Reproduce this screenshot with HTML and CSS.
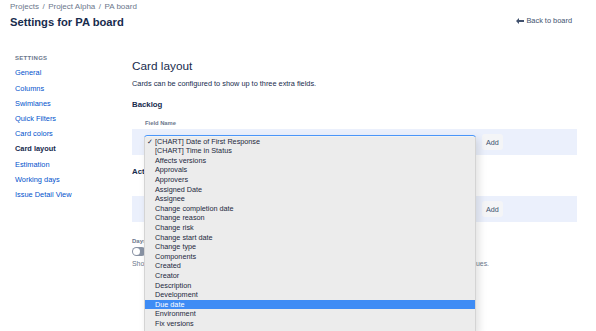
FILE: index.html
```html
<!DOCTYPE html>
<html lang="en">
<head>
<meta charset="utf-8">
<title>Settings for PA board</title>
<link rel="stylesheet" href="styles.css">
</head>
<body>
<header class="header">
  <div class="header-left">
    <nav class="breadcrumb"><span>Projects</span><span class="sep">/</span><span>Project Alpha</span><span class="sep">/</span><span>PA board</span></nav>
    <h1 class="title">Settings for PA board</h1>
  </div>
  <a class="back" href="#"><svg class="back-icon" viewBox="0 0 8 6" width="8" height="6"><path d="M0 3 L3 0 L3 2 L8 2 L8 4 L3 4 L3 6 Z" fill="#42526e"/></svg>Back to board</a>
</header>
<div class="layout">
  <aside class="sidebar">
    <div class="side-title">SETTINGS</div>
    <ul class="side-nav">
      <li><a href="#">General</a></li>
      <li><a href="#">Columns</a></li>
      <li><a href="#">Swimlanes</a></li>
      <li><a href="#">Quick Filters</a></li>
      <li><a href="#">Card colors</a></li>
      <li class="active">Card layout</li>
      <li><a href="#">Estimation</a></li>
      <li><a href="#">Working days</a></li>
      <li><a href="#">Issue Detail View</a></li>
    </ul>
  </aside>
  <main class="main">
    <h2 class="heading">Card layout</h2>
    <p class="desc">Cards can be configured to show up to three extra fields.</p>
    <h3 class="section">Backlog</h3>
    <div class="field-label">Field Name</div>
    <div class="row">
      <div class="select focus">
        <div class="popup">
          <div class="opt checked"><span class="check">✓</span>[CHART] Date of First Response</div>
          <div class="opt">[CHART] Time in Status</div>
          <div class="opt">Affects versions</div>
          <div class="opt">Approvals</div>
          <div class="opt">Approvers</div>
          <div class="opt">Assigned Date</div>
          <div class="opt">Assignee</div>
          <div class="opt">Change completion date</div>
          <div class="opt">Change reason</div>
          <div class="opt">Change risk</div>
          <div class="opt">Change start date</div>
          <div class="opt">Change type</div>
          <div class="opt">Components</div>
          <div class="opt">Created</div>
          <div class="opt">Creator</div>
          <div class="opt">Description</div>
          <div class="opt">Development</div>
          <div class="opt hl">Due date</div>
          <div class="opt">Environment</div>
          <div class="opt">Fix versions</div>
        </div>
      </div>
      <button class="add">Add</button>
    </div>
    <h3 class="section">Active sprints</h3>
    <div class="field-label">Field Name</div>
    <div class="row">
      <div class="select"></div>
      <button class="add">Add</button>
    </div>
    <div class="days-label">Days in column</div>
    <div class="toggle"><span class="knob"></span></div>
    <p class="hint">Show the number of days that an issue has spent in its current column on the board, based on the status values.</p>
  </main>
</div>
</body>
</html>
```
FILE: styles.css
```css
html, body {
  margin: 0;
  padding: 0;
  overflow: hidden;
  background: #fff;
}
body {
  font-family: "Liberation Sans", Arial, sans-serif;
  color: #172b4d;
  width: 596px;
  height: 331px;
}
.header {
  display: flex;
  justify-content: space-between;
  padding: 1px 24px 0 10px;
}
.breadcrumb {
  font-size: 8px;
  line-height: 12px;
  color: #6b778c;
  white-space: nowrap;
}
.breadcrumb .sep {
  margin: 0 3.5px;
}
.title {
  margin: 0;
  font-size: 11.2px;
  line-height: 18px;
  font-weight: 700;
  color: #172b4d;
}
.back {
  margin-top: 14px;
  font-size: 7.4px;
  line-height: 12px;
  height: 12px;
  color: #42526e;
  text-decoration: none;
  display: flex;
  align-items: center;
  gap: 2px;
}
.layout {
  display: grid;
  grid-template-columns: 132px 1fr;
  padding-right: 19px;
}
.sidebar {
  padding: 22px 0 0 15px;
}
.side-title {
  font-size: 6px;
  line-height: 10px;
  font-weight: 700;
  letter-spacing: 0.3px;
  color: #6b778c;
  margin-bottom: 2.4px;
}
.side-nav {
  list-style: none;
  margin: 0;
  padding: 0;
  font-size: 7.4px;
  line-height: 15.2px;
}
.side-nav a {
  color: #0052cc;
  text-decoration: none;
}
.side-nav .active {
  color: #172b4d;
  font-weight: 700;
}
.main {
  padding-top: 27px;
}
.heading {
  margin: 0;
  font-size: 11.8px;
  line-height: 16px;
  font-weight: 400;
}
.desc {
  margin: 5px 0 0;
  font-size: 7.35px;
  line-height: 10px;
}
.section {
  margin: 10px 0 0;
  font-size: 7.8px;
  line-height: 12px;
  font-weight: 700;
}
.section + .field-label {
  margin-top: 8px;
}
.row + .section {
  margin-top: 11px;
}
.field-label {
  padding-left: 13px;
  font-size: 5.8px;
  line-height: 8px;
  font-weight: 700;
  color: #6b778c;
}
.row {
  margin-top: 2px;
  height: 26px;
  background: #ebf0fc;
  display: flex;
  align-items: center;
  padding-left: 12px;
  gap: 6px;
}
.select {
  position: relative;
  width: 332px;
  height: 15px;
  box-sizing: border-box;
  border: 1px solid #dfe1e6;
  border-radius: 3px;
  background: #fafbfc;
}
.select.focus {
  border-color: #4c9aff;
}
.popup {
  position: absolute;
  top: 1px;
  left: -1px;
  width: 332px;
  box-sizing: border-box;
  padding: 0.2px 0 4px;
  background: #ececec;
  border: 1px solid #d4d4d4;
  border-top: none;
  box-shadow: 3px 2px 8px rgba(0, 0, 0, 0.12);
  z-index: 5;
}
.opt {
  position: relative;
  padding-left: 10px;
  font-size: 7.25px;
  line-height: 9.6px;
  height: 9.6px;
  color: #1d2940;
  white-space: nowrap;
}
.check {
  position: absolute;
  left: 2px;
}
.opt.hl {
  background: #3e8cf5;
  color: #fff;
}
.add {
  font-family: inherit;
  font-size: 7.2px;
  color: #42526e;
  background: #f4f5f7;
  border: none;
  border-radius: 3px;
  height: 16px;
  padding: 0 4px;
}
.days-label {
  margin-top: 15px;
  font-size: 6px;
  line-height: 8px;
  color: #6b778c;
  font-weight: 700;
}
.toggle {
  margin-top: 2px;
  width: 14px;
  height: 9px;
  box-sizing: border-box;
  border-radius: 5px;
  background: #8993a4;
  display: flex;
  align-items: center;
  padding-left: 1px;
}
.knob {
  width: 7px;
  height: 7px;
  border-radius: 50%;
  background: #fff;
}
.hint {
  margin: 4px 0 0;
  width: 357px;
  font-size: 6.9px;
  line-height: 8px;
  color: #6b778c;
  text-align: justify;
  text-align-last: justify;
}
```
